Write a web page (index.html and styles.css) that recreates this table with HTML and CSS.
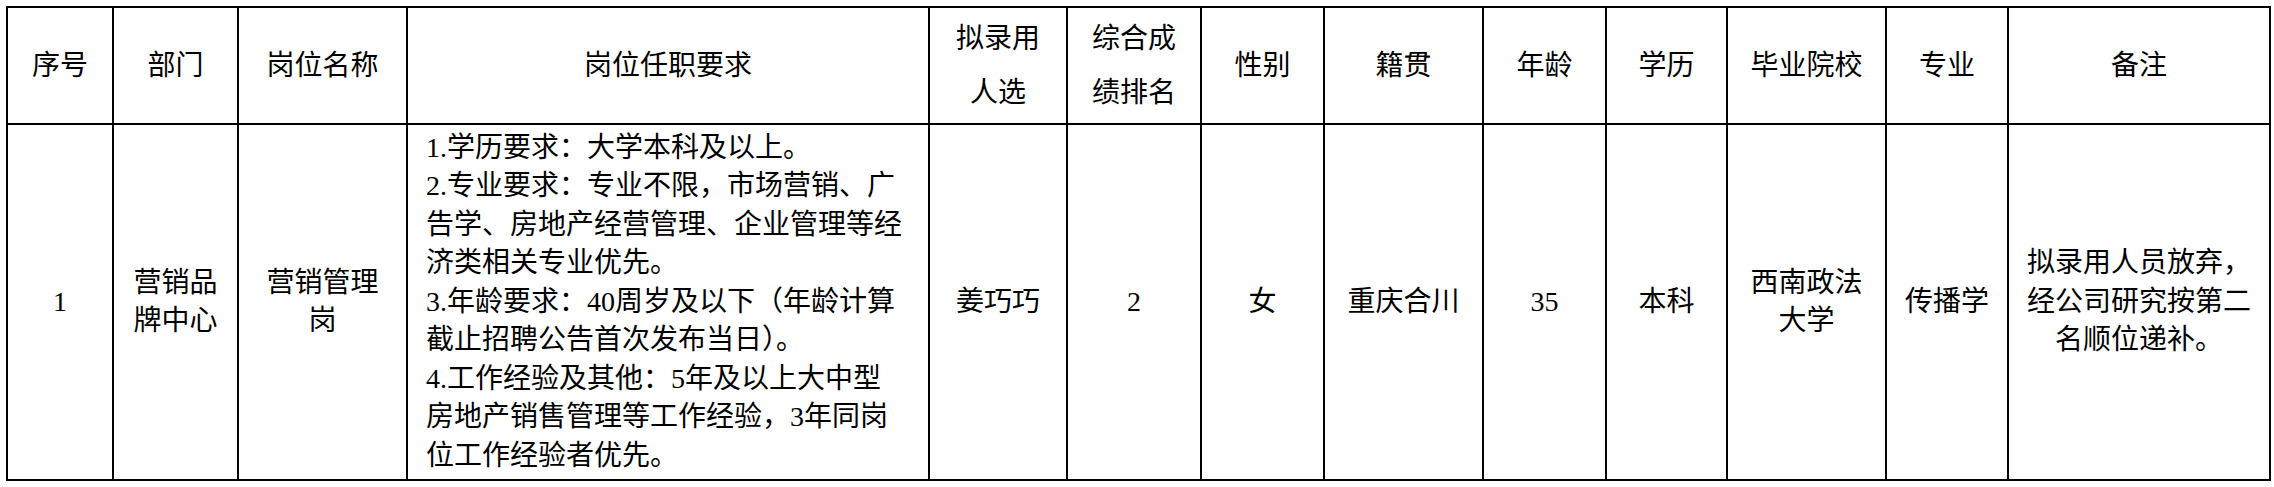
FILE: index.html
```html
<!DOCTYPE html>
<html lang="zh-CN">
<head>
<meta charset="utf-8">
<title>拟录用人选</title>
<link rel="stylesheet" href="styles.css">
</head>
<body>
<table class="sheet">
  <colgroup>
    <col class="c-no">
    <col class="c-dept">
    <col class="c-post">
    <col class="c-req">
    <col class="c-name">
    <col class="c-rank">
    <col class="c-sex">
    <col class="c-origin">
    <col class="c-age">
    <col class="c-edu">
    <col class="c-school">
    <col class="c-major">
    <col class="c-note">
  </colgroup>
  <thead>
    <tr>
      <th>序号</th>
      <th>部门</th>
      <th>岗位名称</th>
      <th>岗位任职要求</th>
      <th>拟录用<br>人选</th>
      <th>综合成<br>绩排名</th>
      <th>性别</th>
      <th>籍贯</th>
      <th>年龄</th>
      <th>学历</th>
      <th>毕业院校</th>
      <th>专业</th>
      <th>备注</th>
    </tr>
  </thead>
  <tbody>
    <tr>
      <td>1</td>
      <td>营销品<br>牌中心</td>
      <td>营销管理<br>岗</td>
      <td class="req">1.学历要求：大学本科及以上。<br>2.专业要求：专业不限，市场营销、广<br>告学、房地产经营管理、企业管理等经<br>济类相关专业优先。<br>3.年龄要求：40周岁及以下（年龄计算<br>截止招聘公告首次发布当日）。<br>4.工作经验及其他：5年及以上大中型<br>房地产销售管理等工作经验，3年同岗<br>位工作经验者优先。</td>
      <td>姜巧巧</td>
      <td>2</td>
      <td>女</td>
      <td>重庆合川</td>
      <td>35</td>
      <td>本科</td>
      <td>西南政法<br>大学</td>
      <td>传播学</td>
      <td>拟录用人员放弃，<br>经公司研究按第二<br>名顺位递补。</td>
    </tr>
  </tbody>
</table>
</body>
</html>
```

FILE: styles.css
```css
html, body {
  margin: 0;
  background: #ffffff;
}

body {
  padding: 6px 0 0 6px;
  font-family: "Liberation Serif", "Noto Sans CJK SC", serif;
  color: #000000;
}

.sheet {
  border-collapse: collapse;
  table-layout: fixed;
  width: 2263px;
}

.sheet th,
.sheet td {
  border: 2px solid #000000;
  padding: 0;
  text-align: center;
  vertical-align: middle;
  font-size: 28px;
  white-space: nowrap;
}

.sheet th {
  height: 115px;
  line-height: 54px;
  font-weight: normal;
}

.sheet td {
  height: 354px;
  line-height: 38.5px;
}

.sheet td.req {
  text-align: left;
  padding-left: 18px;
}

.c-no { width: 106px; }
.c-dept { width: 125px; }
.c-post { width: 169px; }
.c-req { width: 522px; }
.c-name { width: 138px; }
.c-rank { width: 134px; }
.c-sex { width: 123px; }
.c-origin { width: 159px; }
.c-age { width: 123px; }
.c-edu { width: 121px; }
.c-school { width: 159px; }
.c-major { width: 122px; }
.c-note { width: 262px; }
```
